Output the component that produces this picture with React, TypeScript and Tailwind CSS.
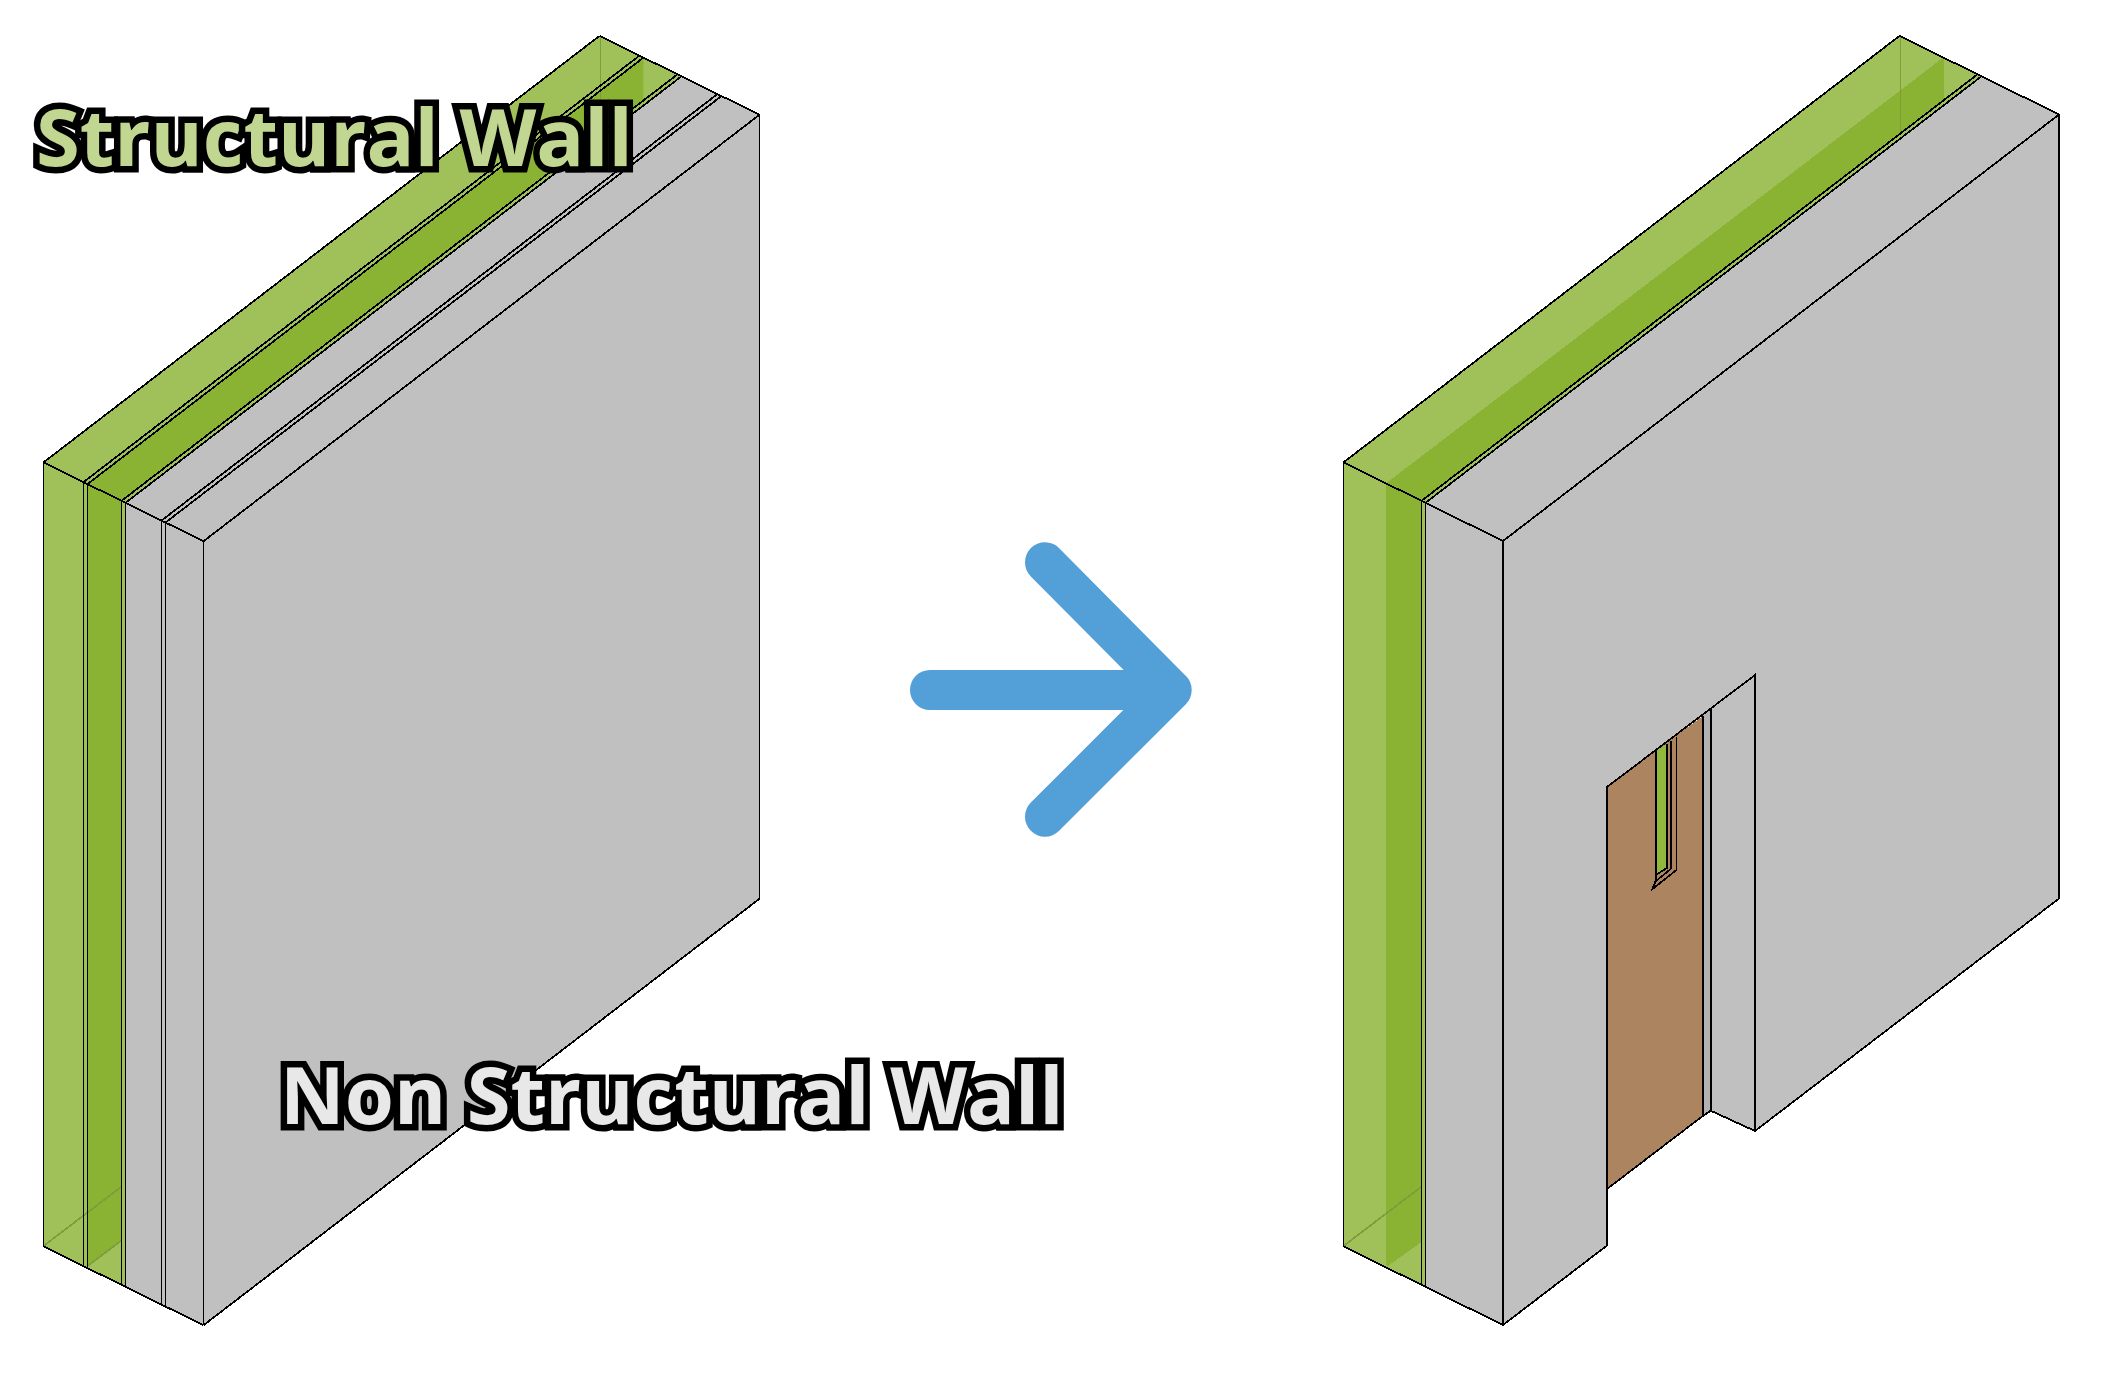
import React from 'react';

const LIGHT = '#A0C15A';
const DARK = '#8AB233';
const GRAY = '#C0C0C0';
const BROWN = '#AC8560';
const HIDDEN = '#7E9E3C';

type Pt = [number, number];

const pts = (list: Pt[]) => list.map((p) => p.join(',')).join(' ');

const Poly = ({ p, fill }: { p: Pt[]; fill: string }) => <polygon points={pts(p)} fill={fill} />;
const Line = ({ p, color = '#000' }: { p: Pt[]; color?: string }) => (
  <polyline points={pts(p)} fill="none" stroke={color} strokeWidth={1.8} />
);

// wall geometry: front top edge plus depth vector and height
const DX = 556;
const DY = -426.5;
const H = 784;
const topAt = (x: number, base: number): Pt => [x, 462.4 + (x - base) * 0.4928];
const back = ([x, y]: Pt): Pt => [x + DX, y + DY];
const bottom = ([x, y]: Pt): Pt => [x, y + H];

const LeftWall = () => {
  const base = 43.5;
  const t = (x: number) => topAt(x, base);
  const xs = [43.5, 83.5, 87.5, 121.5, 125.5, 161.5, 165.5, 203.5];
  const colors = [LIGHT, LIGHT, DARK, LIGHT, GRAY, GRAY, GRAY];
  return (
    <svg className="shrink-0" width={800} height={1380} viewBox="0 0 800 1380" shapeRendering="crispEdges">
      {colors.map((c, i) => {
        const a = t(xs[i]);
        const b = t(xs[i + 1]);
        return (
          <g key={i}>
            <Poly p={[a, back(a), back(b), b]} fill={c === DARK ? LIGHT : c} />
            <Poly p={[a, b, bottom(b), bottom(a)]} fill={c} />
          </g>
        );
      })}
      {/* dark core seen through the light layer */}
      <Poly p={[t(87.5), [643.5, 57.5], [643.5, 100], t(121.5)]} fill={DARK} />
      <Poly p={[[87.5, 1267], [121.5, 1241], [121.5, 1284.5]]} fill={LIGHT} />
      {/* big side face */}
      <Poly p={[t(203.5), back(t(203.5)), bottom(back(t(203.5))), bottom(t(203.5))]} fill={GRAY} />

      {/* hidden edges */}
      <Line color={HIDDEN} p={[[600.5, 36], [600.5, 137]]} />
      <Line color="#97BC48" p={[[643.5, 58], [643.5, 104]]} />
      <Line color={HIDDEN} p={[[43.5, 1246], [121, 1187]]} />
      <Line color={HIDDEN} p={[[87.5, 1266], [121, 1241]]} />

      {/* outlines */}
      {xs.map((x) => (
        <g key={x}>
          <Line p={[t(x), bottom(t(x))]} />
          <Line p={[t(x), back(t(x))]} />
        </g>
      ))}
      <Line p={[t(43.5), t(203.5)]} />
      <Line p={[bottom(t(43.5)), bottom(t(203.5))]} />
      <Line p={[back(t(43.5)), back(t(203.5))]} />
      <Line p={[back(t(203.5)), bottom(back(t(203.5))), bottom(t(203.5))]} />
    </svg>
  );
};

const Arrow = () => (
  <svg className="shrink-0" width={500} height={1380} viewBox="800 0 500 1380">
    <path
      d="M930 690H1171.7M1045 562.3L1171.7 690L1045 816.7"
      fill="none"
      stroke="#539FD7"
      strokeWidth={40}
      strokeLinecap="round"
      strokeLinejoin="round"
    />
  </svg>
);

const RightWall = () => {
  const base = 1343.5;
  const t = (x: number) => topAt(x, base);
  const a = t(1343.5);
  const b = t(1421.5);
  const c = t(1425.5);
  const d = t(1503);
  return (
    <svg className="shrink-0" width={802} height={1380} viewBox="1300 0 802 1380" shapeRendering="crispEdges">
      {/* top face */}
      <Poly p={[a, back(a), back(b), b]} fill={LIGHT} />
      <Poly p={[t(1386), [1944, 57], [1944, 99], b]} fill={DARK} />
      <Poly p={[b, back(b), back(c), c]} fill={LIGHT} />
      <Poly p={[c, back(c), back(d), d]} fill={GRAY} />

      {/* front face */}
      <Poly p={[a, b, bottom(b), bottom(a)]} fill={LIGHT} />
      <Poly p={[t(1386), b, [1421.5, 1242], [1388, 1266], [1386, 1265]]} fill={DARK} />
      <Poly p={[b, c, bottom(c), bottom(b)]} fill={LIGHT} />
      <Poly p={[c, d, bottom(d), bottom(c)]} fill={GRAY} />

      {/* side face with the opening cut out */}
      <Poly
        p={[d, back(d), bottom(back(d)), [1755, 1131], [1755, 675], [1607, 787], [1607, 1245.5], bottom(d)]}
        fill={GRAY}
      />
      <Poly p={[[1710.7, 709.3], [1755, 675], [1755, 1131], [1710.7, 1110.7]]} fill={GRAY} />
      <Poly p={[[1702.7, 716], [1710.7, 709.3], [1710.7, 1110.7], [1702.7, 1116]]} fill="#B2B2B2" />
      <Poly p={[[1607, 787], [1702.7, 716], [1702.7, 1116], [1607, 1189]]} fill={BROWN} />

      {/* small window in the reveal */}
      <Poly p={[[1656, 751], [1666.7, 744], [1666.7, 868], [1656, 875]]} fill="#90B83C" />
      <Line p={[[1656, 751], [1656, 880], [1652.5, 889], [1676.5, 870], [1676.5, 737]]} />
      <Line p={[[1666.7, 744], [1666.7, 868], [1656, 875]]} />
      <Line p={[[1670.7, 741], [1670.7, 869], [1656, 881]]} />

      {/* hidden edges */}
      <Line color={HIDDEN} p={[[1900.5, 36], [1900.5, 134]]} />
      <Line color={HIDDEN} p={[[1343.5, 1246], [1421, 1187]]} />

      {/* outlines */}
      <Line p={[a, back(a), back(d), bottom(back(d)), [1755, 1131], [1710.7, 1110.7], [1702.7, 1116], [1607, 1189]]} />
      <Line p={[a, b, c, d, back(d)]} />
      <Line p={[a, bottom(a), bottom(d), [1607, 1245.5], [1607, 787], [1755, 675], [1755, 1131]]} />
      <Line p={[b, bottom(b)]} />
      <Line p={[c, bottom(c)]} />
      <Line p={[d, bottom(d)]} />
      <Line p={[b, back(b)]} />
      <Line p={[c, back(c)]} />
      <Line p={[[1702.7, 716], [1702.7, 1116]]} />
      <Line p={[[1710.7, 709.3], [1710.7, 1110.7]]} />
    </svg>
  );
};

// each letter gets its own span so its outline bites into the previous letter
const Label = ({ text, className }: { text: string; className: string }) => (
  <div
    className={`absolute font-['Open_Sans','Noto_Sans',sans-serif] text-[79.5px] leading-none font-bold whitespace-pre [-webkit-text-stroke:13px_#000] [paint-order:stroke_fill] ${className}`}
  >
    {text.split('').map((ch, i) => (
      <span key={i}>{ch}</span>
    ))}
  </div>
);

export default function App() {
  return (
    <div className="relative flex h-[1380px] w-[2102px] overflow-hidden bg-white">
      <LeftWall />
      <Arrow />
      <RightWall />
      <Label text="Structural Wall" className="top-[96px] left-[36px] text-[#C1D791]" />
      <Label text="Non Structural Wall" className="top-[1054px] left-[280px] text-[#E8E8E8]" />
    </div>
  );
}
